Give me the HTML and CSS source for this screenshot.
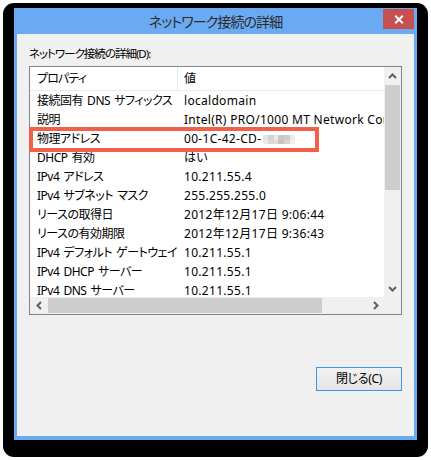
FILE: index.html
```html
<!DOCTYPE html>
<html lang="ja">
<head>
<meta charset="utf-8">
<title>ネットワーク接続の詳細</title>
<link rel="stylesheet" href="styles.css">
</head>
<body>
<div class="shadow">
  <div class="window">
    <div class="titlebar">
      <span class="spacer"></span>
      <div class="title">ネットワーク接続の詳細</div>
      <div class="close">
        <svg width="10" height="9" viewBox="0 0 10 9"><path d="M1.2 0.8 L8.8 8.2 M8.8 0.8 L1.2 8.2" stroke="#fff" stroke-width="2" fill="none"/></svg>
      </div>
    </div>
    <div class="content">
      <div class="label">ネットワーク接続の詳細(D):</div>
      <div class="listbox">
        <div class="viewport">
          <div class="row head"><div class="c1">プロパティ</div><div class="c2">値</div></div>
          <div class="row"><div class="c1">接続固有 DNS サフィックス</div><div class="c2">localdomain</div></div>
          <div class="row"><div class="c1">説明</div><div class="c2">Intel(R) PRO/1000 MT Network Connection</div></div>
          <div class="row"><div class="c1">物理アドレス</div><div class="c2">00-1C-42-CD-<span class="blur"></span></div></div>
          <div class="row"><div class="c1">DHCP 有効</div><div class="c2">はい</div></div>
          <div class="row"><div class="c1">IPv4 アドレス</div><div class="c2">10.211.55.4</div></div>
          <div class="row"><div class="c1">IPv4 サブネット マスク</div><div class="c2">255.255.255.0</div></div>
          <div class="row"><div class="c1">リースの取得日</div><div class="c2">2012年12月17日 9:06:44</div></div>
          <div class="row"><div class="c1">リースの有効期限</div><div class="c2">2012年12月17日 9:36:43</div></div>
          <div class="row"><div class="c1">IPv4 デフォルト ゲートウェイ</div><div class="c2">10.211.55.1</div></div>
          <div class="row"><div class="c1">IPv4 DHCP サーバー</div><div class="c2">10.211.55.1</div></div>
          <div class="row"><div class="c1">IPv4 DNS サーバー</div><div class="c2">10.211.55.1</div></div>
        </div>
        <div class="vscroll">
          <div class="sbtn"><svg width="9" height="6" viewBox="0 0 9 6"><path d="M1 5 L4.5 1.5 L8 5" stroke="#606060" stroke-width="2" fill="none"/></svg></div>
          <div class="vthumb"></div>
          <div class="track"></div>
          <div class="sbtn"><svg width="9" height="6" viewBox="0 0 9 6"><path d="M1 1 L4.5 4.5 L8 1" stroke="#606060" stroke-width="2" fill="none"/></svg></div>
        </div>
        <div class="hscroll">
          <div class="sbtn"><svg width="6" height="9" viewBox="0 0 6 9"><path d="M5 1 L1.5 4.5 L5 8" stroke="#606060" stroke-width="2" fill="none"/></svg></div>
          <div class="hthumb"></div>
          <div class="track"></div>
          <div class="sbtn"><svg width="6" height="9" viewBox="0 0 6 9"><path d="M1 1 L4.5 4.5 L1 8" stroke="#606060" stroke-width="2" fill="none"/></svg></div>
        </div>
        <div class="corner"></div>
        <div class="highlight"></div>
      </div>
      <div class="actions"><button class="btn">閉じる(C)</button></div>
    </div>
  </div>
</div>
</body>
</html>
```
FILE: styles.css
```css
* { box-sizing: border-box; }
html, body {
  margin: 0;
  padding: 0;
  background: #ffffff;
}
body {
  font-family: "Noto Sans", "Noto Sans CJK JP", sans-serif;
  font-size: 12px;
  font-feature-settings: "palt";
  color: #000;
}
.shadow {
  margin: 3px;
  width: 425px;
  padding: 5px 11px 17px 11px;
  background: #000;
  border-radius: 11px;
}
.window {
  width: 403px;
  background: #6aaaf2;
  padding: 0 3px 4px 3px;
}
.titlebar {
  height: 26px;
  display: grid;
  grid-template-columns: 31px 1fr 31px;
  align-items: start;
}
.title {
  text-align: center;
  font-size: 14px;
  letter-spacing: -0.9px;
  line-height: 27px;
  color: #2b2b2b;
  white-space: nowrap;
}
.close {
  margin-top: 1px;
  height: 20px;
  width: 31px;
  background: #c75050;
  display: flex;
  align-items: center;
  justify-content: center;
}
.content {
  background: #f0f0f0;
  padding: 12px 12px 45px 12px;
}
.label {
  font-size: 11.5px;
  letter-spacing: -1px;
  line-height: 16px;
  height: 16px;
  margin-bottom: 4px;
  white-space: nowrap;
}
.listbox {
  position: relative;
  border: 1px solid #858585;
  background: #fff;
  display: grid;
  grid-template-columns: 354px 17px;
  grid-template-rows: 230px 17px;
}
.viewport {
  overflow: hidden;
  background: #fff;
}
.row {
  display: flex;
  height: 19px;
  line-height: 19px;
  white-space: nowrap;
}
.row .c1 {
  width: 148px;
  flex: none;
  padding-left: 7px;
  letter-spacing: -0.5px;
  word-spacing: 1.5px;
  overflow: hidden;
}
.row .c2 {
  padding-left: 6px;
  letter-spacing: 0.3px;
  flex: none;
}
.row.head {
  height: 24px;
  line-height: 23px;
  border-bottom: 1px solid #e6ebf1;
}
.row.head .c1 {
  border-right: 1px solid #e6ebf1;
  letter-spacing: -0.9px;
}
.blur {
  display: inline-block;
  width: 32px;
  height: 9px;
  vertical-align: -1px;
  margin-left: 2px;
  background:
    linear-gradient(90deg, #e4e4e4 0 5px, #d3d3d3 5px 11px, #e9e9e9 11px 15px, #c9c9c9 15px 21px, #cdcdcd 21px 27px, #ececec 27px 32px) top / 32px 5px no-repeat,
    linear-gradient(90deg, #eaeaea 0 5px, #d8d8d8 5px 11px, #dedede 11px 15px, #c4c4c4 15px 21px, #d6d6d6 21px 27px, #f0f0f0 27px 32px) bottom / 32px 4px no-repeat;
}
.vscroll {
  background: #f0f0f0;
  display: flex;
  flex-direction: column;
}
.hscroll {
  background: #f0f0f0;
  display: flex;
}
.sbtn {
  width: 17px;
  height: 17px;
  flex: none;
  display: flex;
  align-items: center;
  justify-content: center;
}
.vthumb {
  height: 105px;
  margin: 1px 1px 0 1px;
  background: #cdcdcd;
  flex: none;
}
.hthumb {
  width: 274px;
  margin: 1px 0 1px 1px;
  background: #cdcdcd;
  flex: none;
}
.track { flex: 1; }
.corner { background: #f0f0f0; }
.highlight {
  position: absolute;
  left: -1px;
  top: 60px;
  width: 290px;
  height: 25px;
  border: 4px solid #f2604c;
}
.actions {
  margin-top: 52px;
  display: flex;
  justify-content: flex-end;
}
.btn {
  width: 86px;
  height: 24px;
  border: 1px solid #3c95f0;
  background: linear-gradient(#f2f2f2, #e4e4e4);
  font-family: inherit;
  font-size: 12px;
  letter-spacing: -0.3px;
  font-feature-settings: "palt";
  color: #000;
  padding: 0;
  line-height: 22px;
}
```
